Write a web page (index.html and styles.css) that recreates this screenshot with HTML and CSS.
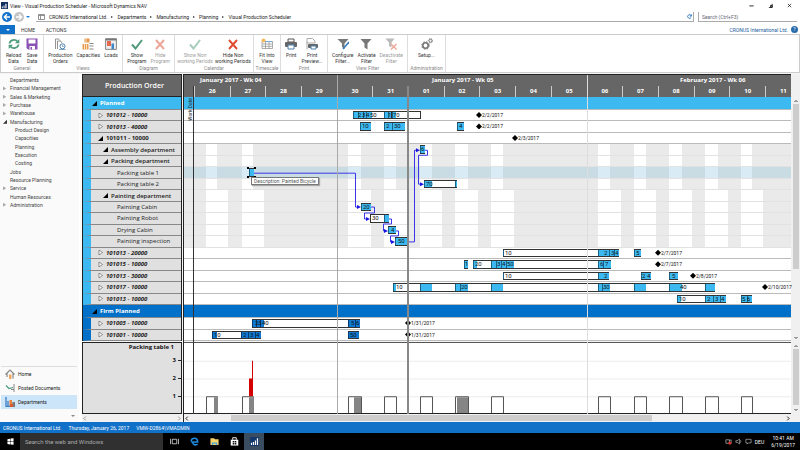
FILE: index.html
```html
<!DOCTYPE html>
<html lang="en">
<head>
    <meta charset="UTF-8">
    <meta name="viewport" content="width=device-width, initial-scale=1.0">
    <title>View - Visual Production Scheduler - Microsoft Dynamics NAV</title>
    <link rel="stylesheet" href="styles.css">
</head>
<body>
    <header class="titlebar">
        <svg class="app-icon" viewBox="0 0 8 8"><rect width="8" height="8" fill="#12305f"/><path d="M1 7V5h1v2zM3 7V4h1v3zM5 7V2h1.300v5z" fill="#fff"/></svg>
        <span class="window-title">View - Visual Production Scheduler - Microsoft Dynamics NAV</span>
        <div class="window-buttons">
            <button aria-label="Minimize"><svg viewBox="0 0 6 6"><path d="M0.500 3.500h5" stroke="#000" stroke-width="1"/></svg></button>
            <button aria-label="Restore"><svg viewBox="0 0 6 6"><path d="M1 5.500h4V1M3 3h2v2H3z" stroke="#111" fill="none"/></svg></button>
            <button aria-label="Close"><svg viewBox="0 0 6 6"><path d="M1 1l4 4M5 1L1 5" stroke="#000" stroke-width=".8"/></svg></button>
        </div>
    </header>

    <div class="addressbar">
        <button class="round back" aria-label="Back"><svg viewBox="0 0 10 10"><path d="M8 5H2.500M5 2.300L2.300 5 5 7.700" stroke="#fff" stroke-width="1.300" fill="none"/></svg></button>
        <button class="round forward" aria-label="Forward"><svg viewBox="0 0 10 10"><path d="M2 5h5.500M5 2.300L7.700 5 5 7.700" stroke="#fff" stroke-width="1.300" fill="none"/></svg></button>
        <svg class="caret" viewBox="0 0 4 4"><path d="M0 1h4L2 3z" fill="#1e7fd6"/></svg>
        <nav class="breadcrumb">
            <svg class="page-icon" viewBox="0 0 7 6"><path d="M.5.5h6v5h-6zM.5 1.500h6M2.500 1.500v4" stroke="#777" stroke-width=".8" fill="#fff"/></svg>
            <a href="#">CRONUS International Ltd.</a><i></i>
            <a href="#">Departments</a><i></i>
            <a href="#">Manufacturing</a><i></i>
            <a href="#">Planning</a><i></i>
            <a href="#">Visual Production Scheduler</a>
            <button class="refresh" aria-label="Refresh"><svg viewBox="0 0 6 6"><path d="M5 2A2.200 2.200 0 1 0 5 4M5.300.5v2h-2" stroke="#1c6fc0" fill="none"/></svg></button>
        </nav>
        <input class="search" type="text" placeholder="Search (Ctrl+F3)" aria-label="Search">
    </div>

    <div class="tabs">
        <button class="file-tab" aria-label="File"><svg class="caret" viewBox="0 0 4 4"><path d="M0 1h4L2 3z" fill="#fff"/></svg></button>
        <button class="tab">HOME</button>
        <button class="tab active">ACTIONS</button>
        <span class="company">CRONUS International Ltd.</span>
        <button class="help" aria-label="Help">?</button>
    </div>

    <div class="ribbon">
        <section class="group general">
            <div class="tools">
                <button><svg viewBox="0 0 12 12"><path d="M1.500 5.500A4.500 4 0 0 1 9.500 3.500M10.500 6.500A4.500 4 0 0 1 2.500 8.500" stroke="#4f9c7c" stroke-width="1.800" fill="none"/><path d="M11.300 1v4.300H7zM.7 11V6.700H5z" fill="#4f9c7c"/></svg>Reload<br>Data</button>
                <button><svg viewBox="0 0 12 12"><path d="M.5.500h11v11H2L.5 10z" fill="#8a51b5"/><path d="M2.500 1.500h7v4h-7zM3.500 8h5.500v3.500H3.500z" fill="#fff"/><path d="M4.500 9h1.500v2.500H4.500z" fill="#8a51b5"/></svg>Save<br>Data</button>
            </div>
            <h2>General</h2>
        </section>
        <section class="group views">
            <div class="tools">
                <button><svg viewBox="0 0 12 12"><path d="M1.500 11V1h3.500M3.500 11V3h3l1.500 2" stroke="#888" stroke-width=".9" fill="none"/><path d="M4.500 1l2.500 2.500" stroke="#aaa"/><circle cx="8.500" cy="8.300" r="2.500" fill="#fff" stroke="#4b80ae"/><path d="M8.500 7v1.500h1.200M5 11.500h6.500" stroke="#4b80ae" stroke-width=".7" fill="none"/></svg>Production<br>Orders</button>
                <button><svg viewBox="0 0 12 12"><path d="M2.500.5h5v4h-5zM.5 6h6v5.500h-6z" fill="#e69a4c"/><path d="M4 .5v4M2.500 6v5.500M4.500 6v5.500" stroke="#fff" stroke-width=".7"/><path d="M7.500 5.500h4M7.500 8h4M7.500 11h4" stroke="#888"/></svg>Capacities</button>
                <button><svg viewBox="0 0 12 12"><path d="M.6.600h10.800v10.800H.6z" fill="#eee" stroke="#888"/><path d="M2 3h4v5H2z" fill="#e4684c"/><path d="M6.500 5.500H9V11H6.500z" fill="#3f86c8"/><path d="M.5 1.700h11" stroke="#777" stroke-width="1.500"/></svg>Loads</button>
            </div>
            <h2>Views</h2>
        </section>
        <section class="group diagram">
            <div class="tools">
                <button><svg viewBox="0 0 12 12"><path d="M1 6.500l3.500 4L11 2" stroke="#4f9c7c" stroke-width="2" fill="none"/></svg>Show<br>Program</button>
                <button class="off"><svg viewBox="0 0 12 12"><path d="M2 2l8 9M10 2l-8 9" stroke="#df4b2c" stroke-width="1.900"/></svg>Hide<br>Program</button>
            </div>
            <h2>Diagram</h2>
        </section>
        <section class="group calendar">
            <div class="tools">
                <button class="off"><svg viewBox="0 0 12 12"><path d="M1 6.500l3.500 4L11 2" stroke="#4f9c7c" stroke-width="2" fill="none"/></svg>Show Non<br>working Periods</button>
                <button><svg viewBox="0 0 12 12"><path d="M2 2l8 9M10 2l-8 9" stroke="#df4b2c" stroke-width="1.900"/></svg>Hide Non<br>working Periods</button>
            </div>
            <h2>Calendar</h2>
        </section>
        <section class="group timescale">
            <div class="tools">
                <button><svg viewBox="0 0 12 12"><path d="M1 3.500h10.500v7H1zM1 6h10.500M1 8.300h10.500M4.500 3.500v7M8 3.500v7" stroke="#999" stroke-width=".8" fill="#fff"/><circle cx="2.500" cy="2.500" r="2" fill="#f5b95b"/><path d="M4 3.500h7.500" stroke="#7aa7d0"/></svg>Fit Into<br>View</button>
            </div>
            <h2>Timescale</h2>
        </section>
        <section class="group print">
            <div class="tools">
                <button><svg viewBox="0 0 12 12"><path d="M3 1h6v3H3z" fill="#fff" stroke="#555"/><rect y="4" width="12" height="5" rx="1" fill="#666"/><path d="M3 7h6v4H3z" fill="#fff" stroke="#4b80ae"/></svg>Print</button>
                <button><svg viewBox="0 0 12 12"><path d="M1 .5h5.500L9 3v2H1z" fill="#fff" stroke="#aaa"/><rect x="2" y="6" width="10" height="4" rx="1" fill="#666"/><path d="M5 8h5v3H5z" fill="#fff" stroke="#4b80ae"/><path d="M1 4v7.500" stroke="#aaa"/></svg>Print<br>Preview...</button>
            </div>
            <h2>Print</h2>
        </section>
        <section class="group filter">
            <div class="tools">
                <button><svg viewBox="0 0 12 12"><path d="M.5 1h11L7.500 5.500V11L5 9V5.500z" fill="#777"/><path d="M12 4l-6 7" stroke="#3b7fc4" stroke-width="1.700"/></svg>Configure<br>Filter...</button>
                <button><svg viewBox="0 0 12 12"><path d="M.5 1h11L7.500 5.500V11.500L4.500 9.500v-4z" fill="#777"/></svg>Activate<br>Filter</button>
                <button class="off"><svg viewBox="0 0 12 12"><path d="M.5.500h9L6.500 4.500V9.500L4 8V4.500z" fill="#777"/><path d="M6 6l5.500 5.500M11.500 6L6 11.500" stroke="#df4b2c" stroke-width="1.300"/></svg>Deactivate<br>Filter</button>
            </div>
            <h2>View Filter</h2>
        </section>
        <section class="group admin">
            <div class="tools">
                <button><svg viewBox="0 0 12 12"><circle cx="4.500" cy="7.500" r="2.700" stroke="#777" stroke-width="1.600" fill="none"/><circle cx="4.500" cy="7.500" r="3.800" stroke="#777" stroke-dasharray="1.500 1.500" fill="none"/><circle cx="9.500" cy="2.700" r="1.500" stroke="#777" fill="none"/><circle cx="9.500" cy="2.700" r="2.200" stroke="#777" stroke-dasharray="1 1" stroke-width=".8" fill="none"/></svg>Setup...</button>
            </div>
            <h2>Administration</h2>
        </section>
    </div>

    <main class="workspace">
        <aside class="sidebar">
            <ul class="menu">
                <li><a href="#">Departments</a></li>
                <li class="closed"><a href="#">Financial Management</a></li>
                <li class="closed"><a href="#">Sales &amp; Marketing</a></li>
                <li class="closed"><a href="#">Purchase</a></li>
                <li class="closed"><a href="#">Warehouse</a></li>
                <li class="open"><a href="#">Manufacturing</a></li>
                <li class="sub"><a href="#">Product Design</a></li>
                <li class="sub"><a href="#">Capacities</a></li>
                <li class="sub"><a href="#">Planning</a></li>
                <li class="sub"><a href="#">Execution</a></li>
                <li class="sub"><a href="#">Costing</a></li>
                <li><a href="#">Jobs</a></li>
                <li><a href="#">Resource Planning</a></li>
                <li class="closed"><a href="#">Service</a></li>
                <li><a href="#">Human Resources</a></li>
                <li class="closed"><a href="#">Administration</a></li>
            </ul>
            <nav class="places">
                <a href="#"><svg viewBox="0 0 10 10"><path d="M.5 5.500L5 1l4.500 4.500M8 4.500V9.500M2 4.500V8" stroke="#888" stroke-width="1.200" fill="none"/><path d="M4 5.500h2.500V10H4z" fill="#f0a860"/></svg>Home</a>
                <a href="#"><svg viewBox="0 0 10 10"><path d="M1 2.500l3 3 4-1" stroke="#4f9c7c" stroke-width="1.200" fill="none"/><path d="M9 1v8M6 6.500h3" stroke="#888"/></svg>Posted Documents</a>
                <a href="#" class="current"><svg viewBox="0 0 10 10"><path d="M1 0v10M1 9.500h4M3 4v5" stroke="#3b7fc4" stroke-width="1.300"/><path d="M4.500 3h2.500v6H4.500z" fill="#e8823c"/><path d="M7.500 5H10v5H7z" fill="#777"/><path d="M5 7h3v3H5z" fill="#d85a32"/></svg>Departments</a>
            </nav>
            <div class="more"><svg class="caret" viewBox="0 0 4 4"><path d="M0 1h4L2 3z" fill="#888"/></svg></div>
        </aside>

        <section class="order-pane">
            <h1>Production Order</h1>
            <div class="tree" id="tree"></div>
            <div class="load-label">
                <strong>Packing table 1</strong>
                <div class="scale"><span>3</span><span>2</span><span>1</span></div>
            </div>
            <div class="hscroll"><svg viewBox="0 0 4 4"><path d="M3 .5L1.500 2 3 3.500" stroke="#999" fill="none" stroke-width=".8"/></svg><svg viewBox="0 0 4 4"><path d="M1 .5L2.500 2 1 3.500" stroke="#999" fill="none" stroke-width=".8"/></svg></div>
        </section>

        <section class="chart-pane">
            <div class="timescale-head">
                <div class="weeks" id="weeks"></div>
                <div class="days" id="days"></div>
            </div>
            <div class="gantt" id="gantt">
                <svg class="links" viewBox="184 97 607 245" preserveAspectRatio="none">
                    <g fill="none" stroke="#3a36e8">
                        <path d="M254 173.500H355.500V207.500H358"/>
                        <path d="M371 207.500H374.500V213.500H364.500V219.500H367"/>
                        <path d="M389 219.500H391.500V224.500H383.500V231.500H385"/>
                        <path d="M396 231.500H398.500V236.500H390.500V242.500H392"/>
                        <path d="M407 242.500H414.500V150.500H417"/>
                        <path d="M425 150.500H427.500V155.500H418.500V184.500H421"/>
                    </g>
                    <path fill="#1a14e0" d="M357 205.500l4 2-4 2zM366 217.500l4 2-4 2zM384 229.500l4 2-4 2zM391 240.500l4 2-4 2zM416 148.500l4 2-4 2zM420 182.500l4 2-4 2z"/>
                </svg>
                <span class="work-date">Work Date</span>
                <span class="tooltip">Description: Painted Bicycle</span>
            </div>
            <svg class="histogram" id="histogram" viewBox="184 342 607 72" preserveAspectRatio="none"></svg>
            <div class="hscroll">
                <svg viewBox="0 0 4 4"><path d="M3 .5L1.500 2 3 3.500" stroke="#222" fill="none" stroke-width=".8"/></svg>
                <div class="track"><div class="thumb"></div></div>
                <svg viewBox="0 0 4 4"><path d="M1 .5L2.500 2 1 3.500" stroke="#222" fill="none" stroke-width=".8"/></svg>
            </div>
            <div class="rules" id="rules"></div>
        </section>

        <div class="vscrolls">
            <div class="vscroll upper"><svg viewBox="0 0 4 4"><path d="M.5 3L2 1.500 3.500 3" stroke="#444" fill="none"/></svg><div class="track"><div class="thumb"></div></div><svg viewBox="0 0 4 4"><path d="M.5 1L2 2.500 3.500 1" stroke="#444" fill="none"/></svg></div>
            <div class="vscroll lower"><svg viewBox="0 0 4 4"><path d="M.5 3L2 1.500 3.500 3" stroke="#444" fill="none"/></svg><div class="track"><div class="thumb"></div></div><svg viewBox="0 0 4 4"><path d="M.5 1L2 2.500 3.500 1" stroke="#444" fill="none"/></svg></div>
        </div>
    </main>

    <footer class="statusbar">
        <span>CRONUS International Ltd.</span>
        <span>Thursday, January 26, 2017</span>
        <span>VMW-D2864\VMADMIN</span>
    </footer>

    <div class="taskbar">
        <button class="start" aria-label="Start"><svg viewBox="0 0 8 8"><path d="M.5 1.300L3.500.800v3h-3zM4 .7L7.500.200v3.600H4zM.5 4.300h3v3l-3-.5zM4 4.300h3.500v3.500L4 7.300z" fill="#fff"/></svg></button>
        <input class="task-search" type="text" placeholder="Search the web and Windows" aria-label="Search the web and Windows">
        <button aria-label="Task View"><svg viewBox="0 0 10 10"><path d="M2.500 2.500h5v5h-5zM.5 2v6M9.500 2v6" stroke="#ddd" stroke-width=".9" fill="none"/></svg></button>
        <button aria-label="Edge"><svg viewBox="0 0 10 10"><path d="M1.300 5.500h7.200C8.500 0 2 .5 1.200 4.500M3 5.500c0 3.500 3.500 3.800 5.500 2.500" stroke="#1b8ae0" stroke-width="1.700" fill="none"/></svg></button>
        <button aria-label="File Explorer"><svg viewBox="0 0 10 10"><path d="M.5 1.500h4l1 1h4V9h-9z" fill="#f7d36b"/><path d="M2 9V6h6v3H6.500V7.500h-3V9z" fill="#3fa7e0"/></svg></button>
        <button aria-label="Store"><svg viewBox="0 0 10 10"><path d="M.8 3h8.400v6.500H.8z" fill="#fff"/><path d="M3 3V.8h4V3" stroke="#fff" fill="none"/><path d="M3 4.500h1.700v1.700H3zM5.300 4.500H7v1.700H5.300zM3 6.700h1.700v1.700H3zM5.300 6.700H7v1.700H5.300z" fill="#111"/></svg></button>
        <button class="running" aria-label="Dynamics NAV"><svg viewBox="0 0 10 10"><rect width="10" height="10" fill="#14386c"/><path d="M1 9V6.500h1.300V9zM3.200 9V5.500h1.300V9zM5.400 9V4h1.300v5zM7.600 9V1.500H9V9z" fill="#fff"/></svg></button>
        <div class="tray">
            <svg viewBox="0 0 8 8"><path d="M1 2h4v4H1zM5 3l2-1v4L5 5" stroke="#bbb" stroke-width=".8" fill="none"/><circle cx="5.500" cy="6" r="1.700" fill="#e0302c"/></svg>
            <svg viewBox="0 0 8 8"><path d="M1 3h2l2-2v6L3 5H1zM6 2.500q1.500 1.500 0 3" stroke="#ccc" stroke-width=".7" fill="none"/></svg>
            <svg viewBox="0 0 8 8"><path d="M1 1.500h6v4H4L2.500 7V5.500H1z" stroke="#ccc" stroke-width=".7" fill="none"/></svg>
            <span>DEU</span>
            <div class="clock"><span>10:41 AM</span><span>6/19/2017</span></div>
        </div>
    </div>

    <script>
        // Time axis: horizontal range shown by the chart and width of one day
        const START = 184;
        const SPAN = 607;
        const DAY = 35.7;
        const FIRST_DAY = 193.8;
        const pct = (v) => (v / SPAN * 100) + '%';
        const at = (x) => pct(x - START);

        const short = [[206, 217], [242, 253], [348, 361], [384, 396], [420, 432], [455, 468], [491, 503], [598, 610], [634, 646], [669, 682], [705, 718], [741, 752]];
        const long = [[206, 228], [242, 264], [348, 371], [384, 407], [420, 442], [455, 478], [491, 514], [598, 621], [634, 656], [669, 692], [705, 728], [741, 763]];

        // bars: [from, to], fills: [from, to], marks: [x, text]
        const rows = [
            { name: 'Planned', kind: 'section planned' },
            { name: '101012 - 10000', kind: 'order', bars: [[353, 391], [391, 421]], fills: [[353, 358], [358, 363], [363, 366], [366, 372], [384, 388], [388, 391], [392, 396]], marks: [[358, '2'], [362, '3'], [366, '4'], [370, '50'], [388, '1'], [393, '70']], due: [479, '2/2/2017'] },
            { name: '101013 - 40000', kind: 'order', bars: [[360, 371], [384, 405], [457, 464]], fills: [[360, 371], [384, 392], [392, 405], [457, 464]], marks: [[362, '10'], [386, '2'], [394, '30'], [459, '4']], due: [479, '2/2/2017'] },
            { name: '101011 - 10000', kind: 'order expanded', due: [515, '2/3/2017'] },
            { name: 'Assembly department', kind: 'dept', free: short, bars: [[420, 425]], fills: [[420, 425]], marks: [[421, '6']] },
            { name: 'Packing department', kind: 'dept', free: short },
            { name: 'Packing table 1', kind: 'machine selected', free: short, bars: [[249, 254]], fills: [[249, 254]], handles: [249, 254] },
            { name: 'Packing table 2', kind: 'machine', free: short, bars: [[424, 457]], fills: [[424, 432], [455, 457]], marks: [[426, '70']] },
            { name: 'Painting department', kind: 'dept', free: long },
            { name: 'Painting Cabin', kind: 'machine', free: long, bars: [[361, 371]], fills: [[361, 371]], marks: [[363, '20']] },
            { name: 'Painting Robot', kind: 'machine', free: long, bars: [[370, 389]], fills: [[384, 389]], marks: [[372, '30']] },
            { name: 'Drying Cabin', kind: 'machine', free: long, bars: [[388, 396]], fills: [[388, 396]], marks: [[391, '4']] },
            { name: 'Painting inspection', kind: 'machine', free: long, bars: [[395, 407]], fills: [[395, 407]], marks: [[398, '50']] },
            { name: '101013 - 20000', kind: 'order', bars: [[503, 619], [634, 641]], fills: [[503, 504], [598, 609], [609, 614], [614, 619], [634, 641]], marks: [[505, '10'], [604, '2'], [611, '3'], [615, '4'], [636, '5']], due: [658, '2/7/2017'] },
            { name: '101015 - 10000', kind: 'order', bars: [[464, 468], [473, 611]], fills: [[464, 468], [473, 477], [491, 496], [496, 501], [501, 506], [506, 514], [598, 603], [603, 611]], marks: [[465, '1'], [475, '20'], [497, '3'], [502, '4'], [507, '50'], [600, '6'], [605, '7']], due: [658, '2/7/2017'] },
            { name: '101013 - 30000', kind: 'order', bars: [[503, 609], [641, 651], [669, 678]], fills: [[503, 504], [598, 609], [641, 651], [669, 678]], marks: [[505, '10'], [604, '2'], [642, '2'], [647, '4'], [672, '5']], due: [693, '2/8/2017'] },
            { name: '101017 - 10000', kind: 'order', bars: [[393, 715]], fills: [[393, 396], [420, 432], [455, 460], [460, 468], [491, 503], [598, 602], [602, 610], [634, 646], [669, 682], [705, 715]], marks: [[396, '10'], [461, '20'], [603, '30'], [680, '40']], due: [765, '2/10/2017'] },
            { name: '101013 - 10000', kind: 'order', bars: [[677, 726], [741, 752]], fills: [[677, 681], [705, 713], [713, 720], [720, 726], [741, 747], [747, 752]], marks: [[679, '10'], [707, '2'], [715, '3'], [721, '4'], [742, '5'], [747, '6']] },
            { name: 'Firm Planned', kind: 'section firm' },
            { name: '101005 - 10000', kind: 'order firm', bars: [[252, 360]], fills: [[252, 256], [256, 260], [260, 264], [348, 355], [355, 360]], marks: [[255, '2'], [258, '3'], [262, '40'], [351, '5'], [356, '6']], due: [408, '1/31/2017'] },
            { name: '101001 - 10000', kind: 'order firm', bars: [[212, 261], [348, 359]], fills: [[212, 217], [241, 248], [248, 255], [255, 261], [348, 359]], marks: [[214, '10'], [243, '2'], [250, '3'], [256, '4'], [350, '50']], due: [408, '1/31/2017'] }
        ];

        const box = (cls, a, b) => `<div class="${cls}" style="left:${at(a)};width:${pct(b - a)}"></div>`;
        const openArrow = '<svg viewBox="0 0 5 5"><path d="M5 0v5H0z"/></svg>';
        const closedArrow = '<svg viewBox="0 0 5 5"><path d="M1 0l3.500 2.500-3.500 2.500z" fill="#fff" stroke="#333" stroke-width=".5"/></svg>';

        let tree = '';
        let gantt = '';
        rows.forEach((row) => {
            const closed = row.kind.startsWith('order') && !row.kind.includes('expanded');
            const arrow = row.kind.startsWith('machine') ? '' : closed ? closedArrow : openArrow;
            tree += `<div class="row ${row.kind}">${arrow}<span>${row.name}</span></div>`;

            gantt += `<div class="row ${row.kind}${row.free ? ' shaded' : ''}">`;
            gantt += (row.free || []).map((f) => box('free', f[0], f[1])).join('');
            gantt += (row.bars || []).map((b) => box('bar', b[0], b[1])).join('');
            gantt += (row.fills || []).map((f) => box('fill', f[0], f[1])).join('');
            gantt += (row.marks || []).map((m) => `<span class="mark" style="left:${at(m[0])}">${m[1]}</span>`).join('');
            if (row.handles) {
                gantt += box('handles', row.handles[0] - 2, row.handles[1] + 2);
            }
            if (row.due) {
                gantt += `<span class="due" style="left:${at(row.due[0] - 3)}"><b></b>${row.due[1]}</span>`;
            }
            gantt += '</div>';
        });
        document.getElementById('tree').innerHTML = tree;
        document.getElementById('gantt').insertAdjacentHTML('afterbegin', gantt);

        document.getElementById('weeks').innerHTML = [[200, 'January 2017 - Wk 04'], [432, 'January 2017 - Wk 05'], [680, 'February 2017 - Wk 06']]
            .map((w) => `<span style="left:${at(w[0])}">${w[1]}</span>`).join('');

        const names = ['26', '27', '28', '29', '30', '31', '01', '02', '03', '04', '05', '06', '07', '08', '09', '10', '11'];
        document.getElementById('days').innerHTML = names
            .map((n, i) => `<span style="left:${at(FIRST_DAY + i * DAY)};width:${pct(DAY)}">${n}</span>`).join('');

        document.getElementById('rules').innerHTML = [[193, 'dark'], [337, 'mid'], [407, 'today'], [587, 'light']]
            .map((r) => `<i class="${r[1]}" style="left:${at(r[0])}"></i>`).join('');

        // Load histogram of the selected machine
        let load = '<path d="M184 360.500H791M184 378.500H791M184 396.500H791" stroke="#ececec"/>';
        short.forEach((s) => {
            load += `<path d="M${s[0] + .5} 414V396.500H${s[1] + .5}V414" fill="#fff" stroke="#555"/>`;
        });
        load += '<path d="M214 397h4v17h-4zM249 397h5v17h-5zM354 397h7v17h-7zM457 397h11v17h-11z" fill="#858585"/>';
        load += '<path d="M249 396V378h3V360h1v36z" fill="#d40000"/>';
        load += '<path d="M184 413.500H791" stroke="#222"/>';
        document.getElementById('histogram').innerHTML = load;
    </script>
</body>
</html>
```
FILE: styles.css
```css
/* General Styles */
* {
    box-sizing: border-box;
}

body {
    margin: 0;
    height: 100vh;
    display: flex;
    flex-direction: column;
    overflow: hidden;
    background: #fff;
    color: #333;
    font-family: Roboto, "Open Sans", sans-serif;
    font-size: 5px;
    line-height: 6px;
}

button, input {
    font: inherit;
    color: inherit;
    margin: 0;
    padding: 0;
    border: none;
    background: none;
}

a {
    color: inherit;
    text-decoration: none;
}

svg {
    display: block;
    flex: none;
}

h1, h2 {
    margin: 0;
}

/* Title bar */
.titlebar {
    display: flex;
    align-items: center;
    height: 11px;
    padding: 0 8px 0 1px;
}

.app-icon {
    width: 7px;
    height: 7px;
}

.window-title {
    margin-left: 2px;
    color: #222;
    white-space: nowrap;
}

.window-buttons {
    display: flex;
    gap: 14px;
    margin-left: auto;
}

.window-buttons svg {
    width: 5px;
    height: 5px;
}

/* Address bar */
.addressbar {
    display: flex;
    align-items: center;
    height: 12px;
    padding: 0 3px 0 2px;
    gap: 2px;
}

.round {
    width: 10px;
    height: 10px;
    border-radius: 50%;
}

.back {
    background: #1473cc;
}

.forward {
    background: #c4c4c4;
}

.caret {
    width: 4px;
    height: 4px;
}

.breadcrumb {
    flex: 1;
    display: flex;
    align-items: center;
    gap: 4px;
    height: 10px;
    margin-left: 4px;
    padding-left: 2px;
    border-bottom: 1px solid #aaa;
    border-right: 1px solid #aaa;
    white-space: nowrap;
    color: #222;
}

.breadcrumb i {
    border: 1px solid transparent;
    border-left: 2px solid #333;
    border-right: 0;
}

.page-icon {
    width: 7px;
    height: 6px;
}

.refresh {
    margin-left: auto;
    padding-right: 1px;
}

.refresh svg {
    width: 5px;
    height: 5px;
}

.search {
    width: 99px;
    height: 10px;
    margin-left: 2px;
    padding-left: 3px;
    border-left: 1px solid #aaa;
    border-bottom: 1px solid #aaa;
}

.search::placeholder {
    color: #667;
}

/* Ribbon tabs */
.tabs {
    display: flex;
    align-items: center;
    height: 11px;
    padding: 2px 2px 0 0;
    color: #333;
}

.file-tab {
    display: flex;
    align-items: center;
    justify-content: center;
    width: 15px;
    height: 9px;
    background: #1170c8;
}

.tab {
    width: 26px;
    height: 9px;
}

.tab.active {
    margin-left: 2px;
}

.company {
    margin-left: auto;
    color: #1d5ea0;
}

.help {
    width: 7px;
    height: 7px;
    margin-left: 3px;
    border-radius: 50%;
    background: #2a6dad;
    color: #fff;
    line-height: 7px;
}

/* Ribbon */
.ribbon {
    display: flex;
    height: 39px;
    border: 1px solid #ccc;
    background: #fff;
}

.group {
    display: flex;
    flex-direction: column;
    padding: 3px 0 1px;
    border-right: 1px solid #ddd;
}

.tools {
    flex: 1;
    display: flex;
    justify-content: space-evenly;
    align-items: flex-start;
}

.tools button {
    display: block;
    text-align: center;
    white-space: nowrap;
}

.tools svg {
    width: 12px;
    height: 12px;
    margin: 0 auto 2px;
}

.tools .off {
    opacity: 0.5;
}

.group h2 {
    font-size: 5px;
    line-height: 6px;
    font-weight: normal;
    text-align: center;
    color: #888;
}

.general { width: 43px; }
.views { width: 79px; }
.diagram { width: 52px; }
.calendar { width: 79px; }
.timescale { width: 27px; }
.print { width: 47px; }
.filter { width: 80px; }
.admin { width: 38px; }

/* Workspace */
.workspace {
    flex: 1;
    display: flex;
    min-height: 0;
    padding-top: 1px;
    background: #f4f4f4;
}

.sidebar {
    display: flex;
    flex-direction: column;
    width: 82px;
    background: #fafafa;
    border-right: 3px solid #fff;
}

.menu {
    display: grid;
    grid-auto-rows: 1fr;
    align-items: center;
    height: 133px;
    margin: 2px 0 0;
    padding: 0 0 0 10px;
    list-style: none;
    color: #444;
}

.menu .sub {
    padding-left: 5px;
}

.closed::before, .open::before {
    content: "";
    float: left;
    width: 4px;
    height: 4px;
    margin: 1px 0 0 -7px;
    background: #aaa;
    clip-path: polygon(0 0, 80% 50%, 0 100%);
}

.open::before {
    background: #333;
    clip-path: polygon(100% 0, 100% 100%, 0 100%);
}

.places {
    margin: auto 2px 0 1px;
    border-top: 1px solid #ddd;
}

.places a {
    display: flex;
    align-items: center;
    gap: 3px;
    height: 14px;
    padding-left: 4px;
    color: #222;
}

.places svg {
    width: 10px;
    height: 10px;
}

.places .current {
    background: #cde5f9;
}

.more {
    display: flex;
    align-items: center;
    justify-content: flex-end;
    height: 13px;
    padding-right: 4px;
}

/* Order tree */
.order-pane {
    display: flex;
    flex-direction: column;
    width: 100px;
    margin-right: 1px;
}

.order-pane h1 {
    height: 23px;
    padding-left: 5px;
    border: 1px solid #222;
    background: #666;
    color: #fff;
    font-family: "Open Sans", sans-serif;
    font-size: 7px;
    font-weight: 600;
    line-height: 22px;
    text-align: center;
}

.tree, .gantt {
    flex: 1;
    display: grid;
    grid-template-rows: 13px repeat(17, 1fr) 13px repeat(2, 1fr);
    min-height: 0;
    position: relative;
}

.tree {
    border-left: 1px solid #222;
    border-right: 1px solid #222;
}

.tree .row {
    display: flex;
    align-items: center;
    gap: 3px;
    border-left: 8px solid #3db9f1;
    border-bottom: 1px solid #888;
    background: #e0e0e0;
    color: #222;
    font-family: "Open Sans", sans-serif;
    font-size: 6px;
    line-height: 8px;
    min-height: 0;
}

.tree .row svg {
    width: 5px;
    height: 5px;
}

.tree .order {
    padding-left: 7px;
    font-weight: bold;
    font-style: italic;
}

.tree .expanded {
    font-style: normal;
}

.tree .dept {
    padding-left: 12px;
    font-weight: 600;
}

.tree .machine {
    padding-left: 26px;
}

.tree .section {
    padding-left: 1px;
    background: #3db9f1;
    color: #fff;
    font-weight: bold;
}

.tree .firm {
    border-left-color: #0070c8;
}

.tree .section.firm {
    background: #0070c8;
}

.load-label {
    position: relative;
    height: 72px;
    margin-top: 1px;
    padding-right: 7px;
    border: 1px solid #222;
    background: #e0e0e0;
    text-align: right;
    color: #111;
    font-family: "Open Sans", sans-serif;
    font-size: 6px;
    line-height: 8px;
}

.scale {
    display: grid;
    gap: 10px;
    padding-top: 5px;
    margin-right: -7px;
    font-weight: bold;
}

.scale span {
    padding-right: 5px;
    background: linear-gradient(#222, #222) right center / 3px 1px no-repeat;
}

.hscroll {
    display: flex;
    align-items: center;
    justify-content: space-between;
    height: 8px;
    background: #f0f0f0;
}

.hscroll svg {
    width: 5px;
    height: 5px;
}

.hscroll .track {
    flex: 1;
    padding: 0 22% 0 7%;
}

.hscroll .thumb {
    height: 6px;
    background: #cdcdcd;
}

/* Chart */
.chart-pane {
    flex: 1;
    display: flex;
    flex-direction: column;
    position: relative;
    min-width: 0;
    border-left: 1px solid #222;
}

.timescale-head {
    height: 23px;
    border-top: 1px solid #222;
    background: #666;
    color: #fff;
    font-family: "Open Sans", sans-serif;
    font-size: 6px;
    font-weight: bold;
}

.weeks, .days {
    position: relative;
    height: 11px;
    overflow: hidden;
}

.weeks span, .days span {
    position: absolute;
    line-height: 11px;
    white-space: nowrap;
}

.days span {
    border-left: 1px solid #ccc;
    text-align: center;
}

.gantt {
    background: #fff;
}

.gantt .row {
    position: relative;
    min-height: 0;
    border-bottom: 1px solid #bbb;
}

.gantt .section {
    background: #3db9f1;
}

.gantt .section.firm {
    background: #0070c8;
}

.gantt .shaded {
    background: #eaeaea;
    border-bottom-color: #e2e2e2;
}

.gantt .free, .gantt .bar, .gantt .fill {
    position: absolute;
}

.free {
    top: 0;
    bottom: 0;
    background: #fff;
}

.gantt .selected {
    background: #c9dbe3;
}

.selected .free {
    background: #d9ecf5;
}

.bar {
    top: 1px;
    bottom: 1px;
    border: 1px solid #333;
    background: #fff;
}

.fill {
    top: 2px;
    bottom: 2px;
    background: #3db9f1;
    border-left: 1px solid #17628a;
}

.firm .fill {
    background: #0f78d0;
    border-left-color: #053a70;
}

.mark, .due {
    position: absolute;
    top: 1px;
    color: #111;
    font-size: 6px;
    line-height: 8px;
    white-space: nowrap;
}

.due {
    display: flex;
    align-items: center;
    font-size: 5px;
}

.due b {
    width: 6px;
    height: 6px;
    background: #000;
    clip-path: polygon(50% 0, 100% 50%, 50% 100%, 0 50%);
}

.handles {
    position: absolute;
    top: 0;
    bottom: 0;
    background:
        linear-gradient(#000, #000) left top / 2px 2px,
        linear-gradient(#000, #000) right top / 2px 2px,
        linear-gradient(#000, #000) left bottom / 2px 2px,
        linear-gradient(#000, #000) right bottom / 2px 2px;
    background-repeat: no-repeat;
}

.links {
    position: absolute;
    width: 100%;
    height: 100%;
}

.work-date {
    position: absolute;
    top: 1px;
    left: 3px;
    color: #222;
    font-size: 5px;
    writing-mode: vertical-rl;
    transform: rotate(180deg);
}

.tooltip {
    position: absolute;
    top: 80px;
    left: 67px;
    padding: 0 2px;
    border: 1px solid #777;
    background: #fff;
    box-shadow: 1px 1px 1px #aaa;
    color: #555;
    white-space: nowrap;
}

.histogram {
    width: 100%;
    height: 72px;
    margin-top: 1px;
    border-top: 1px solid #555;
    background: #fff;
}

.rules i {
    position: absolute;
    top: 1px;
    bottom: 8px;
    width: 1px;
    background: #aaa;
}

.rules .dark {
    background: #333;
    top: 12px;
}

.rules .today {
    width: 2px;
    top: 12px;
    background: #888;
}

.rules .light {
    background: #ddd;
}

/* Vertical scrollbars */
.vscrolls {
    display: flex;
    flex-direction: column;
    width: 9px;
    padding: 23px 1px 8px 2px;
    background: #f0f0f0;
}

.vscroll {
    display: flex;
    flex-direction: column;
    align-items: center;
    padding: 2px 0;
}

.vscroll svg {
    width: 4px;
    height: 4px;
}

.vscroll .track {
    flex: 1;
    width: 6px;
}

.vscroll .thumb {
    height: 71%;
    margin-top: 1px;
    background: #cdcdcd;
}

.upper {
    flex: 1;
}

.lower {
    height: 72px;
}

.lower .thumb {
    height: 94%;
}

/* Status bar and taskbar */
.statusbar {
    display: flex;
    align-items: center;
    gap: 7px;
    height: 11px;
    padding-left: 3px;
    background: #1170c8;
    color: #fff;
}

.taskbar {
    display: flex;
    align-items: center;
    height: 17px;
    background: #000;
    color: #fff;
}

.taskbar button {
    display: flex;
    align-items: center;
    justify-content: center;
    width: 20px;
    height: 17px;
}

.taskbar svg {
    width: 9px;
    height: 9px;
}

.taskbar .start svg, .taskbar .tray svg {
    width: 7px;
    height: 7px;
}

.taskbar .running {
    background: #3a4c5f;
}

.task-search {
    width: 143px;
    height: 17px;
    margin-right: 1px;
    padding-left: 5px;
    background: #303030;
    font-size: 6px;
}

.task-search::placeholder {
    color: #aaa;
}

.tray {
    display: flex;
    align-items: center;
    gap: 3px;
    margin-left: auto;
    padding-right: 5px;
}

.clock {
    display: flex;
    flex-direction: column;
    align-items: center;
    margin-left: 4px;
    line-height: 7px;
}
```
